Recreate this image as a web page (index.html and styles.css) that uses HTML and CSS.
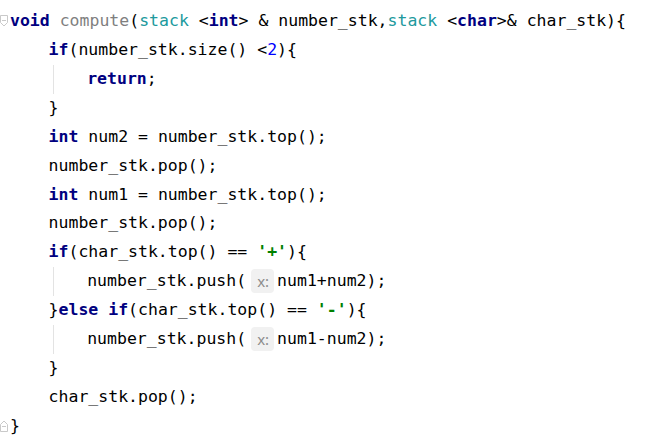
FILE: index.html
```html
<!DOCTYPE html>
<html>
<head>
<meta charset="utf-8">
<link rel="stylesheet" href="styles.css">
</head>
<body>
<div class="editor">
  <div class="line"><svg class="fold" width="9" height="12" viewBox="0 0 9 12"><path d="M0.5 0.5 H7.5 V7.5 L4 11 L0.5 7.5 Z" fill="#fff" stroke="#c9c9c9"/><path d="M2 5.5 H6" stroke="#c9c9c9"/></svg><span class="kw">void</span> <span class="fn">compute</span>(<span class="cls">stack</span> &lt;<span class="kw">int</span>&gt; &amp; number_stk,<span class="cls">stack</span> &lt;<span class="kw">char</span>&gt;&amp; char_stk){</div>
  <div class="line"><span class="ind"></span><span class="kw">if</span>(number_stk.size() &lt;<span class="num">2</span>){</div>
  <div class="line"><span class="ind"></span><span class="ind guide"></span><span class="kw">return</span>;</div>
  <div class="line"><span class="ind"></span>}</div>
  <div class="line"><span class="ind"></span><span class="kw">int</span> num2 = number_stk.top();</div>
  <div class="line"><span class="ind"></span>number_stk.pop();</div>
  <div class="line"><span class="ind"></span><span class="kw">int</span> num1 = number_stk.top();</div>
  <div class="line"><span class="ind"></span>number_stk.pop();</div>
  <div class="line"><span class="ind"></span><span class="kw">if</span>(char_stk.top() == <span class="str">'+'</span>){</div>
  <div class="line"><span class="ind"></span><span class="ind guide"></span>number_stk.push(<span class="hint">x:</span>num1+num2);</div>
  <div class="line"><span class="ind"></span>}<span class="kw">else if</span>(char_stk.top() == <span class="str">'-'</span>){</div>
  <div class="line"><span class="ind"></span><span class="ind guide"></span>number_stk.push(<span class="hint">x:</span>num1-num2);</div>
  <div class="line"><span class="ind"></span>}</div>
  <div class="line"><span class="ind"></span>char_stk.pop();</div>
  <div class="line"><svg class="fold fold-end" width="9" height="12" viewBox="0 0 9 12"><path d="M0.5 11.5 H7.5 V4.5 L4 1 L0.5 4.5 Z" fill="#fff" stroke="#c9c9c9"/><path d="M2 6.5 H6" stroke="#c9c9c9"/></svg>}</div>
</div>
</body>
</html>
```
FILE: styles.css
```css
html, body {
  margin: 0;
  padding: 0;
  background: #ffffff;
}
.editor {
  padding: 7px 0 0 10px;
  font-family: "DejaVu Sans Mono", "Liberation Mono", monospace;
  font-size: 16.5px;
  color: #000000;
}
.line {
  position: relative;
  height: 28.93px;
  line-height: 28.93px;
  white-space: pre;
}
.ind {
  display: inline-block;
  width: 38.6px;
  height: 28.93px;
  vertical-align: top;
  position: relative;
}
.guide::before {
  content: "";
  position: absolute;
  left: 4px;
  top: 0;
  bottom: 0;
  border-left: 1px solid #e3e3e3;
}
.kw { color: #000080; font-weight: bold; }
.fn { color: #7f7f7f; }
.cls { color: #20999d; }
.num { color: #0000ff; }
.str { color: #008000; font-weight: bold; }
.hint {
  display: inline-block;
  font-family: "Noto Sans", "DejaVu Sans", sans-serif;
  font-size: 15px;
  color: #8c8c8c;
  background: #f1f1f1;
  border-radius: 4px;
  height: 24px;
  line-height: 24px;
  padding: 0 5px 0 6px;
  margin: 0 3px 0 5px;
  vertical-align: middle;
  position: relative;
  top: -1px;
}
.fold {
  position: absolute;
  left: -10px;
  top: 8px;
}
.fold-end {
  top: 8px;
}
```
